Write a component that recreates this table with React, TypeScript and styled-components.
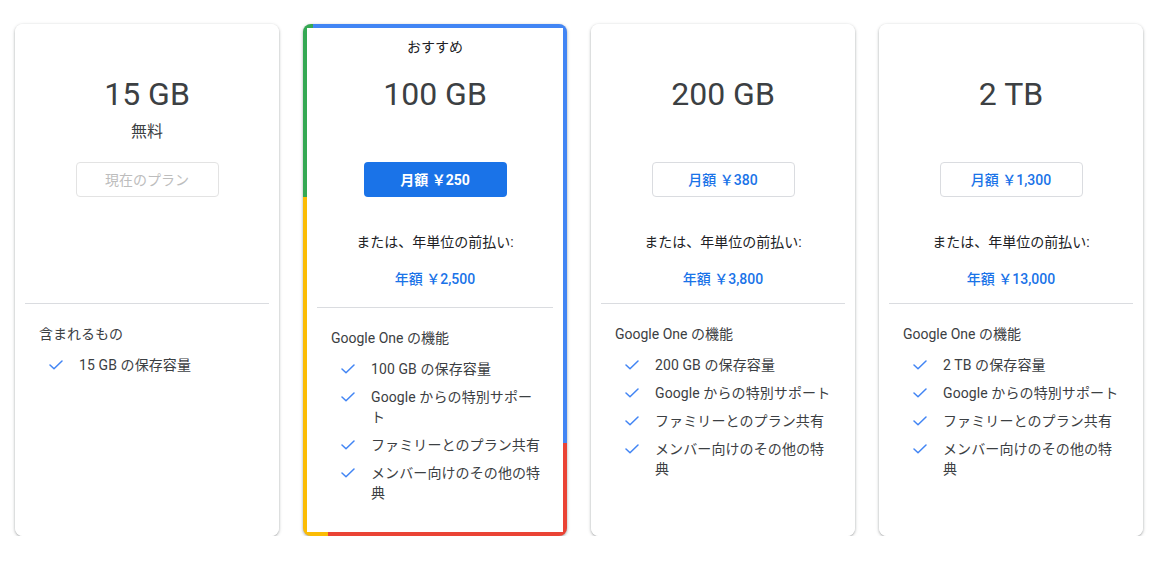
import React from 'react'
import styled, { createGlobalStyle, css } from 'styled-components'

const GlobalStyle = createGlobalStyle`
  html, body {
    margin: 0;
    padding: 0;
    background: #ffffff;
  }
  body {
    font-family: Roboto, "Noto Sans CJK JP", sans-serif;
    color: #3c4043;
  }
`

const Page = styled.div`
  display: flex;
  gap: 24px;
  padding: 24px 0 0 15px;
`

const Card = styled.div<{ $featured?: boolean }>`
  box-sizing: border-box;
  width: 264px;
  height: 512px;
  border-radius: 8px;
  background: #ffffff;
  box-shadow: 0 1px 2px 0 rgba(60, 64, 67, 0.3),
    0 1px 3px 1px rgba(60, 64, 67, 0.15);
  display: flex;
  flex-direction: column;
  ${({ $featured }) =>
    $featured &&
    css`
      padding: 4px;
      background:
        linear-gradient(to bottom, #34a853 173px, #fbbc04 173px) left / 4px 100% no-repeat,
        linear-gradient(to right, #34a853 10px, #4285f4 10px) top / 100% 4px no-repeat,
        linear-gradient(to bottom, #4285f4 419px, #ea4335 419px) right / 4px 100% no-repeat,
        linear-gradient(to right, #fbbc04 25px, #ea4335 25px) bottom / 100% 4px no-repeat,
        #ffffff;
    `}
`

const Inner = styled.div<{ $featured?: boolean }>`
  flex: 1;
  display: flex;
  flex-direction: column;
  padding: 0 10px;
  background: #ffffff;
  border-radius: ${({ $featured }) => ($featured ? '4px' : '8px')};
`

const Top = styled.div<{ $featured?: boolean }>`
  box-sizing: border-box;
  height: 280px;
  display: flex;
  flex-direction: column;
  align-items: center;
  padding-top: ${({ $featured }) => ($featured ? '9px' : '50px')};
  border-bottom: 1px solid #dadce0;
`

const Badge = styled.div`
  font-size: 14px;
  line-height: 20px;
  color: #202124;
  margin-bottom: 17px;
`

const Storage = styled.div`
  font-family: Roboto, "Noto Sans CJK JP", sans-serif;
  font-size: 32px;
  line-height: 40px;
  color: #3c4043;
`

const PriceSlot = styled.div`
  height: 48px;
  display: flex;
  flex-direction: column;
  align-items: center;
`

const Free = styled.div`
  margin-top: 6px;
  font-size: 16px;
  line-height: 24px;
  color: #3c4043;
`

const PlanButton = styled.button<{ $variant: 'current' | 'primary' | 'outline' }>`
  box-sizing: border-box;
  width: 143px;
  height: 35px;
  border-radius: 4px;
  font-family: Roboto, "Noto Sans CJK JP", sans-serif;
  font-size: 14px;
  padding: 0 0 1px;
  cursor: pointer;
  ${({ $variant }) =>
    $variant === 'primary'
      ? css`
          background: #1a73e8;
          border: none;
          color: #ffffff;
          font-weight: 700;
        `
      : $variant === 'outline'
      ? css`
          background: #ffffff;
          border: 1px solid #dadce0;
          color: #1a73e8;
          font-weight: 500;
        `
      : css`
          background: #ffffff;
          border: 1px solid #e3e3e3;
          color: #bdbdbd;
          font-weight: 400;
        `}
`

const Prepay = styled.div`
  margin-top: 35px;
  font-size: 14px;
  line-height: 20px;
  color: #202124;
`

const Yearly = styled.div`
  margin-top: 17px;
  font-size: 14px;
  line-height: 20px;
  color: #1a73e8;
  font-weight: 500;
`

const Features = styled.div`
  display: flex;
  flex-direction: column;
  padding: 20px 4px 0 14px;
`

const FeatureTitle = styled.div`
  font-size: 14px;
  line-height: 20px;
  color: #3c4043;
  margin-bottom: 11px;
`

const FeatureList = styled.ul`
  list-style: none;
  margin: 0;
  padding: 0 0 0 10px;
  display: flex;
  flex-direction: column;
  gap: 8px;
`

const FeatureItem = styled.li`
  display: flex;
  align-items: flex-start;
  gap: 16px;
  font-size: 14px;
  line-height: 20px;
  color: #3c4043;
  letter-spacing: 0.1px;
`

const CheckBox = styled.span`
  flex: 0 0 14px;
  height: 20px;
  display: flex;
  align-items: center;
`

const FeatureText = styled.span`
  white-space: nowrap;
`

const Check = () => (
  <CheckBox>
    <svg width="14" height="10" viewBox="0 0 14 10" fill="none">
      <polyline
        points="1,5 5,8.8 13,1"
        stroke="#4285f4"
        strokeWidth="1.5"
        strokeLinecap="round"
        strokeLinejoin="round"
      />
    </svg>
  </CheckBox>
)

type Plan = {
  storage: string
  featured?: boolean
  free?: boolean
  monthly?: string
  yearly?: string
  featureTitle: string
  features: string[][]
}

const commonFeatures = (size: string): string[][] => [
  [`${size} の保存容量`],
  ['Google からの特別サポート'],
  ['ファミリーとのプラン共有'],
  ['メンバー向けのその他の特', '典'],
]

const plans: Plan[] = [
  {
    storage: '15 GB',
    free: true,
    featureTitle: '含まれるもの',
    features: [['15 GB の保存容量']],
  },
  {
    storage: '100 GB',
    featured: true,
    monthly: '月額 ￥250',
    yearly: '年額 ￥2,500',
    featureTitle: 'Google One の機能',
    features: [
      ['100 GB の保存容量'],
      ['Google からの特別サポー', 'ト'],
      ['ファミリーとのプラン共有'],
      ['メンバー向けのその他の特', '典'],
    ],
  },
  {
    storage: '200 GB',
    monthly: '月額 ￥380',
    yearly: '年額 ￥3,800',
    featureTitle: 'Google One の機能',
    features: commonFeatures('200 GB'),
  },
  {
    storage: '2 TB',
    monthly: '月額 ￥1,300',
    yearly: '年額 ￥13,000',
    featureTitle: 'Google One の機能',
    features: commonFeatures('2 TB'),
  },
]

export default function App() {
  return (
    <>
      <GlobalStyle />
      <Page>
        {plans.map((plan) => (
          <Card key={plan.storage} $featured={plan.featured}>
            <Inner $featured={plan.featured}>
              <Top $featured={plan.featured}>
                {plan.featured && <Badge>おすすめ</Badge>}
                <Storage>{plan.storage}</Storage>
                <PriceSlot>{plan.free && <Free>無料</Free>}</PriceSlot>
                {plan.free ? (
                  <PlanButton $variant="current">現在のプラン</PlanButton>
                ) : (
                  <PlanButton $variant={plan.featured ? 'primary' : 'outline'}>
                    {plan.monthly}
                  </PlanButton>
                )}
                {plan.yearly && (
                  <>
                    <Prepay>または、年単位の前払い:</Prepay>
                    <Yearly>{plan.yearly}</Yearly>
                  </>
                )}
              </Top>
              <Features>
                <FeatureTitle>{plan.featureTitle}</FeatureTitle>
                <FeatureList>
                  {plan.features.map((lines, i) => (
                    <FeatureItem key={i}>
                      <Check />
                      <FeatureText>
                        {lines.map((line, j) => (
                          <React.Fragment key={j}>
                            {j > 0 && <br />}
                            {line}
                          </React.Fragment>
                        ))}
                      </FeatureText>
                    </FeatureItem>
                  ))}
                </FeatureList>
              </Features>
            </Inner>
          </Card>
        ))}
      </Page>
    </>
  )
}
